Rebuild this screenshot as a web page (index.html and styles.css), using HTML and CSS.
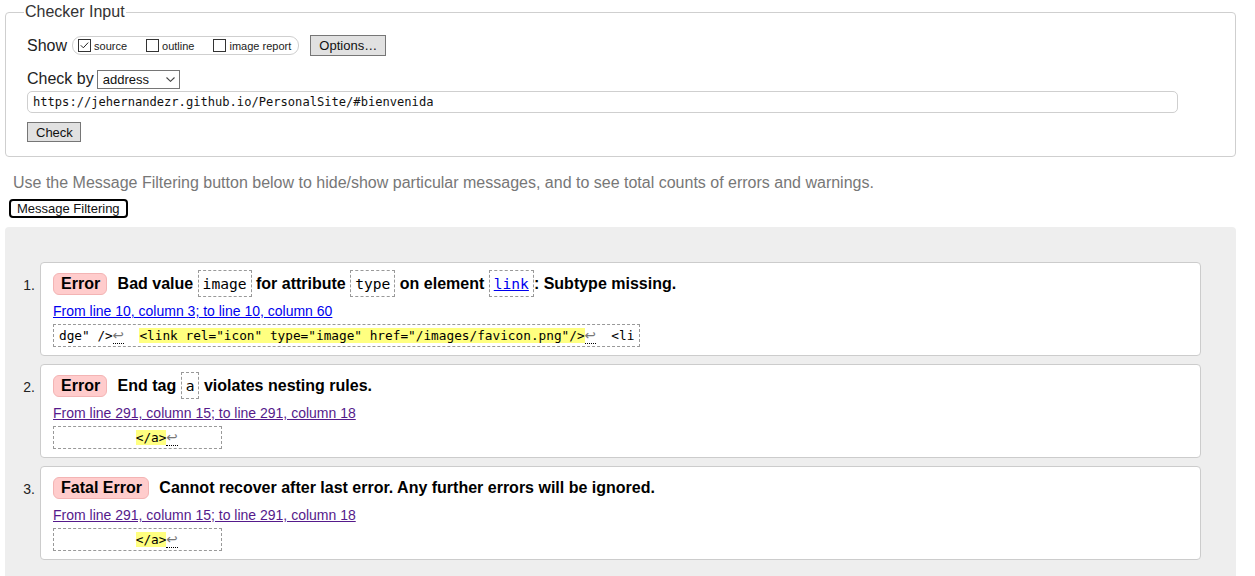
FILE: index.html
```html
<!DOCTYPE html>
<html lang="en">
<head>
<meta charset="utf-8">
<title>Nu Html Checker</title>
<link rel="stylesheet" href="styles.css">
</head>
<body>
<form class="checker">
  <fieldset class="input-set">
    <legend class="legend">Checker Input</legend>
    <div class="row show-row">
      <span class="row-label">Show</span>
      <span class="pill">
        <label class="opt"><span class="cb"><svg width="13" height="13" viewBox="0 0 13 13"><rect x="0.5" y="0.5" width="12" height="12" fill="#fff" stroke="#333"/><polyline points="2.8,6.3 5.3,8.8 10.2,3.6" fill="none" stroke="#222" stroke-width="1"/></svg></span>source</label>
        <label class="opt"><span class="cb"><svg width="13" height="13" viewBox="0 0 13 13"><rect x="0.5" y="0.5" width="12" height="12" fill="#fff" stroke="#333"/></svg></span>outline</label>
        <label class="opt"><span class="cb"><svg width="13" height="13" viewBox="0 0 13 13"><rect x="0.5" y="0.5" width="12" height="12" fill="#fff" stroke="#333"/></svg></span>image report</label>
      </span>
      <button type="button" class="btn options-btn">Options…</button>
    </div>
    <div class="row by-row">
      <span class="row-label">Check by</span>
      <span class="select">address<svg class="chev" width="9" height="5" viewBox="0 0 9 5"><polyline points="0.5,0.5 4.5,4.3 8.5,0.5" fill="none" stroke="#444" stroke-width="1.1"/></svg></span>
    </div>
    <div class="url">https://jehernandezr.github.io/PersonalSite/#bienvenida</div>
    <button type="button" class="btn check-btn">Check</button>
  </fieldset>
</form>
<p class="hint">Use the Message Filtering button below to hide/show particular messages, and to see total counts of errors and warnings.</p>
<button type="button" class="filter-btn">Message Filtering</button>
<section class="results">
  <ol class="messages">
    <li class="msg-item">
      <span class="num">1.</span>
      <div class="card">
        <p class="msg"><span class="badge">Error</span> Bad value <code class="cd">image</code> for attribute <code class="cd">type</code> on element <code class="cd"><a class="cdlink" href="#">link</a></code>: Subtype missing.</p>
        <a class="loc" href="#">From line 10, column 3; to line 10, column 60</a>
        <div class="extract-wrap"><code class="extract">dge" /&gt;<span class="lf">↩</span>  <mark class="hl">&lt;link rel="icon" type="image" href="/images/favicon.png"/&gt;</mark><span class="lf">↩</span>  &lt;li</code></div>
      </div>
    </li>
    <li class="msg-item">
      <span class="num">2.</span>
      <div class="card">
        <p class="msg"><span class="badge">Error</span> End tag <code class="cd">a</code> violates nesting rules.</p>
        <a class="loc visited" href="#">From line 291, column 15; to line 291, column 18</a>
        <div class="extract-wrap"><code class="extract">          <mark class="hl">&lt;/a&gt;</mark><span class="lf">↩</span>     </code></div>
      </div>
    </li>
    <li class="msg-item">
      <span class="num">3.</span>
      <div class="card">
        <p class="msg"><span class="badge">Fatal Error</span> Cannot recover after last error. Any further errors will be ignored.</p>
        <a class="loc visited" href="#">From line 291, column 15; to line 291, column 18</a>
        <div class="extract-wrap"><code class="extract">          <mark class="hl">&lt;/a&gt;</mark><span class="lf">↩</span>     </code></div>
      </div>
    </li>
  </ol>
</section>
</body>
</html>
```

FILE: styles.css
```css
html, body {
  margin: 0;
  background: #fff;
}
body {
  padding: 0 19px 0 5px;
  font-family: "Liberation Sans", Arial, sans-serif;
  color: #222;
}
.checker {
  margin: 0;
}
.input-set {
  margin: 3px 0 0 0;
  padding: 14px 57px 14px 21px;
  border: 1px solid #cfcfcf;
  border-radius: 4px;
  min-width: 0;
}
.legend {
  margin-left: -3px;
  padding: 0 1px;
  font-size: 16px;
  line-height: 18px;
  color: #333;
}
.row {
  display: flex;
  align-items: center;
}
.show-row {
  height: 21px;
}
.by-row {
  height: 20px;
  margin-top: 13px;
}
.row-label {
  font-size: 16px;
  line-height: 18px;
  color: #222;
}
.show-row .row-label {
  margin-right: 5px;
}
.by-row .row-label {
  margin-right: 3px;
}
.pill {
  display: inline-flex;
  align-items: center;
  box-sizing: border-box;
  height: 19px;
  padding: 0 7px 0 5px;
  border: 1px solid #cfcfcf;
  border-radius: 9px;
}
.opt {
  display: inline-flex;
  align-items: center;
  font-size: 11px;
  color: #222;
  margin-right: 19px;
}
.opt:last-child {
  margin-right: 0;
}
.cb {
  display: inline-flex;
  margin-right: 3px;
}
.cb svg {
  display: block;
}
.btn {
  box-sizing: border-box;
  height: 20px;
  padding: 0 8px;
  border: 1px solid #767676;
  border-radius: 0;
  background: #e1e1e1;
  font-family: "Liberation Sans", Arial, sans-serif;
  font-size: 13px;
  color: #111;
}
.options-btn {
  height: 21px;
  margin-left: 11px;
  width: 76px;
}
.select {
  display: inline-flex;
  align-items: center;
  justify-content: space-between;
  box-sizing: border-box;
  width: 83px;
  height: 19px;
  padding: 0 4px 0 5px;
  border: 1px solid #767676;
  background: #fff;
  font-size: 13px;
  color: #111;
}
.chev {
  display: block;
}
.url {
  box-sizing: border-box;
  height: 22px;
  margin-top: 2px;
  padding: 0 5px;
  border: 1px solid #cfcfcf;
  border-radius: 5px;
  font-family: "DejaVu Sans Mono", monospace;
  font-size: 12.1px;
  line-height: 20px;
  color: #111;
}
.check-btn {
  display: block;
  margin-top: 9px;
  width: 54px;
}
.hint {
  margin: 17px 0 0 8px;
  font-size: 16px;
  line-height: 18px;
  color: #777;
}
.filter-btn {
  display: block;
  box-sizing: border-box;
  height: 19px;
  margin: 7px 0 0 4px;
  padding: 0 6px;
  border: 2px solid #000;
  border-radius: 4px;
  background: #fff;
  font-family: "Liberation Sans", Arial, sans-serif;
  font-size: 13px;
  line-height: 15px;
  color: #111;
}
.results {
  margin-top: 9px;
  padding: 35px 35px 20px 0;
  background: #eee;
  border-radius: 4px;
}
.messages {
  list-style: none;
  margin: 0;
  padding: 0;
}
.msg-item {
  display: flex;
  margin-bottom: 8px;
}
.num {
  flex: none;
  width: 30px;
  padding: 15px 5px 0 0;
  text-align: right;
  font-size: 14px;
  line-height: 16px;
  color: #222;
}
.card {
  flex: 1;
  min-width: 0;
  background: #fff;
  border: 1px solid #ccc;
  border-radius: 4px;
  padding: 7px 12px 8px;
}
.msg {
  margin: 0;
  height: 28px;
  font-size: 16px;
  font-weight: bold;
  line-height: 28px;
  color: #000;
  white-space: nowrap;
}
.badge {
  display: inline-block;
  vertical-align: middle;
  margin-top: -1px;
  margin-right: 6px;
  padding: 0 6px 0 7px;
  border: 1px solid #f3b4b4;
  border-radius: 6px;
  background: #fcc;
  line-height: 20px;
}
.cd {
  display: inline-block;
  vertical-align: middle;
  margin: -3px 0 0;
  padding: 0 4px;
  border: 1px dashed #999;
  font-family: "DejaVu Sans Mono", monospace;
  font-size: 14.6px;
  font-weight: normal;
  line-height: 25px;
  color: #000;
}
.cdlink {
  color: #00e;
  text-decoration: underline;
}
.loc {
  display: block;
  width: max-content;
  margin-top: 5px;
  font-size: 14px;
  line-height: 16px;
  color: #00e;
  text-decoration: underline;
}
.loc.visited {
  color: #551a8b;
}
.extract-wrap {
  margin-top: 5px;
  height: 23px;
}
.extract {
  display: inline-block;
  box-sizing: border-box;
  height: 23px;
  padding: 0 5px;
  border: 1px dashed #999;
  font-family: "DejaVu Sans Mono", monospace;
  font-size: 12.75px;
  line-height: 21px;
  white-space: pre;
  color: #000;
}
.hl {
  background: #ffff80;
  color: #000;
}
.lf {
  font-family: "DejaVu Sans", sans-serif;
  font-size: 13.5px;
  line-height: 14px;
  color: #777;
  border-bottom: 1px dotted #000;
}
```
